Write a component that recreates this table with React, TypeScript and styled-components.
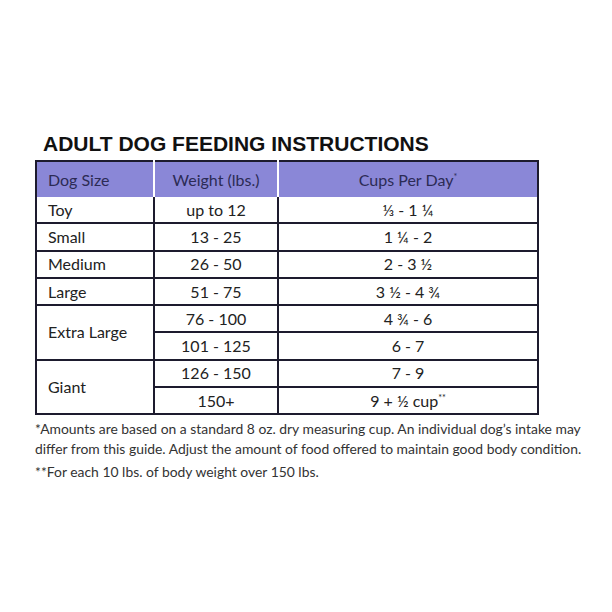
import React from 'react';
import styled, { createGlobalStyle } from 'styled-components';

const GlobalStyle = createGlobalStyle`
  html, body {
    margin: 0;
    padding: 0;
    background: #ffffff;
  }
`;

const Page = styled.div`
  width: 612px;
  height: 612px;
  box-sizing: border-box;
  padding: 131px 0 0 35px;
  font-family: 'Lato', 'Noto Sans', sans-serif;
  color: #222;
`;

const Title = styled.h1`
  margin: 0 0 4px 8px;
  font-family: 'Liberation Sans', Arial, sans-serif;
  font-weight: bold;
  font-size: 21px;
  line-height: 25px;
  color: #111;
`;

const Table = styled.table`
  width: 502px;
  border-collapse: collapse;
  table-layout: fixed;
  border-top: 2px solid #1d1b2e;
`;

const HeadCell = styled.th<{ $align?: 'left' | 'center'; $last?: boolean }>`
  background: #8a87d7;
  height: 35px;
  padding: 0 0 0 ${({ $align }) => ($align === 'left' ? '11px' : '0')};
  text-align: ${({ $align }) => $align || 'center'};
  font-weight: 400;
  font-size: 16px;
  color: #2c2b55;
  border-left: 2px solid ${({ $align }) => ($align === 'left' ? '#1d1b2e' : '#ffffff')};
  border-right: ${({ $last }) => ($last ? '2px solid #1d1b2e' : 'none')};
`;

const Cell = styled.td<{ $align?: 'left' | 'center' }>`
  height: 25.3px;
  padding: 0 0 0 ${({ $align }) => ($align === 'left' ? '11px' : '0')};
  text-align: ${({ $align }) => $align || 'center'};
  font-size: 16px;
  line-height: 20px;
  color: #222;
  border: 2px solid #1d1b2e;
  border-top: none;
`;

const Sup = styled.sup`
  font-size: 9px;
  vertical-align: 6px;
  line-height: 0;
`;

const Notes = styled.div`
  margin-top: 4px;
  font-size: 13.9px;
  color: #333;
  white-space: nowrap;
`;

const Note = styled.p`
  margin: 0 0 3px 0;
  line-height: 20px;
`;

type Row = { size?: string; span?: number; weight: string; cups: React.ReactNode };

const rows: Row[] = [
  { size: 'Toy', weight: 'up to 12', cups: '⅓ - 1 ¼' },
  { size: 'Small', weight: '13 - 25', cups: '1 ¼ - 2' },
  { size: 'Medium', weight: '26 - 50', cups: '2 - 3 ½' },
  { size: 'Large', weight: '51 - 75', cups: '3 ½ - 4 ¾' },
  { size: 'Extra Large', span: 2, weight: '76 - 100', cups: '4 ¾ - 6' },
  { weight: '101 - 125', cups: '6 - 7' },
  { size: 'Giant', span: 2, weight: '126 - 150', cups: '7 - 9' },
  {
    weight: '150+',
    cups: (
      <>
        9 + ½ cup<Sup>**</Sup>
      </>
    ),
  },
];

const App: React.FC = () => (
  <Page>
    <GlobalStyle />
    <Title>ADULT DOG FEEDING INSTRUCTIONS</Title>
    <Table>
      <colgroup>
        <col style={{ width: 118 }} />
        <col style={{ width: 124 }} />
        <col style={{ width: 260 }} />
      </colgroup>
      <thead>
        <tr>
          <HeadCell $align="left">Dog Size</HeadCell>
          <HeadCell>Weight (lbs.)</HeadCell>
          <HeadCell $last>
            Cups Per Day<Sup>*</Sup>
          </HeadCell>
        </tr>
      </thead>
      <tbody>
        {rows.map((r, i) => (
          <tr key={i}>
            {r.size && (
              <Cell $align="left" rowSpan={r.span}>
                {r.size}
              </Cell>
            )}
            <Cell>{r.weight}</Cell>
            <Cell>{r.cups}</Cell>
          </tr>
        ))}
      </tbody>
    </Table>
    <Notes>
      <Note>
        *Amounts are based on a standard 8 oz. dry measuring cup. An individual dog’s intake may
        <br />
        differ from this guide. Adjust the amount of food offered to maintain good body condition.
      </Note>
      <Note>**For each 10 lbs. of body weight over 150 lbs.</Note>
    </Notes>
  </Page>
);

export default App;
